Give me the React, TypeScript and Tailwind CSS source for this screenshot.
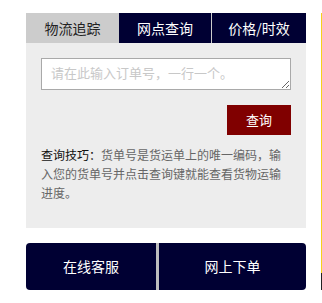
import React from "react";

export default function App() {
  const font = { fontFamily: '"Microsoft YaHei", "Noto Sans CJK SC", sans-serif' };
  return (
    <div className="relative w-[322px] h-[303px] bg-white" style={font}>
      <div className="absolute left-[321px] top-[13px] w-px h-[260px] bg-[#f5d21a]" />
      <div className="absolute left-[321px] top-[273px] w-px h-[17px] bg-[#222]" />
      <div className="pt-[13px] pl-[26px] w-[306px]">
        <div className="flex h-[30px] text-[14px] leading-[30px]">
          <div className="w-[93px] bg-[#cccccc] text-[#222] text-center">物流追踪</div>
          <div className="w-[92px] bg-[#000033] text-white text-center">网点查询</div>
          <div className="w-px bg-[#cccccc]" />
          <div className="w-[94px] bg-[#000033] text-white text-center">价格/时效</div>
        </div>
        <div className="bg-[#ededed] h-[185px] pt-[15px] px-[15px]">
          <textarea
            className="block w-[250px] h-[32px] border border-[#a9a9a9] bg-white px-[9px] py-[4px] text-[13px] leading-[20px] placeholder-[#c8c8c8] resize-y outline-none"
            placeholder="请在此输入订单号，一行一个。"
          />
          <div className="flex justify-end mt-[15px]">
            <button className="w-[64px] h-[30px] bg-[#800000] text-white text-[13px]">查询</button>
          </div>
          <p className="mt-[10px] w-[244px] text-[12px] leading-[19px] text-[#666]">
            <span className="text-[#111]">查询技巧：</span>货单号是货运单上的唯一编码，输入您的货单号并点击查询键就能查看货物运输进度。
          </p>
        </div>
        <div className="mt-[15px] flex h-[47px] rounded-[4px] overflow-hidden text-[14px] text-white">
          <div className="w-[130px] bg-[#000033] flex items-center justify-center">在线客服</div>
          <div className="w-[3px] bg-[#bdbdbd]" />
          <div className="flex-1 bg-[#000033] flex items-center justify-center">网上下单</div>
        </div>
      </div>
    </div>
  );
}
